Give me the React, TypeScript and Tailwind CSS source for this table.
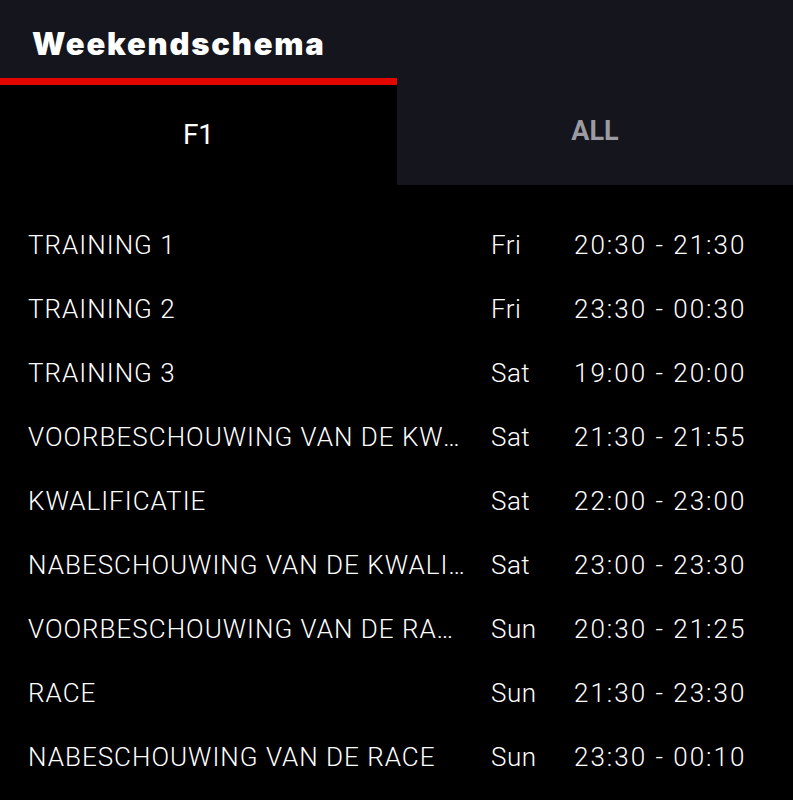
const sessions = [
  { name: "TRAINING 1", day: "Fri", time: "20:30 - 21:30" },
  { name: "TRAINING 2", day: "Fri", time: "23:30 - 00:30" },
  { name: "TRAINING 3", day: "Sat", time: "19:00 - 20:00" },
  { name: "VOORBESCHOUWING VAN DE KWALIFICATIE", day: "Sat", time: "21:30 - 21:55" },
  { name: "KWALIFICATIE", day: "Sat", time: "22:00 - 23:00" },
  { name: "NABESCHOUWING VAN DE KWALIFICATIE", day: "Sat", time: "23:00 - 23:30" },
  { name: "VOORBESCHOUWING VAN DE RACE", day: "Sun", time: "20:30 - 21:25" },
  { name: "RACE", day: "Sun", time: "21:30 - 23:30" },
  { name: "NABESCHOUWING VAN DE RACE", day: "Sun", time: "23:30 - 00:10" },
];

export default function App() {
  return (
    <main className="w-[793px] h-[800px] bg-black text-white overflow-hidden font-['Roboto',sans-serif]">
      {/* header */}
      <div className="h-[78px] bg-[#15151e] flex items-center pl-8 pt-2">
        <h1 className="text-[31px] font-black tracking-[1.8px] font-['Inter',sans-serif] leading-none">
          Weekendschema
        </h1>
      </div>

      {/* tabs */}
      <div className="flex h-[107px]">
        <div className="w-[397px] bg-black border-t-[7px] border-[#e10600] flex items-center justify-center">
          <span className="text-[28px] font-normal">F1</span>
        </div>
        <div className="flex-1 bg-[#15151e] flex items-center justify-center">
          <span className="text-[27px] font-bold text-[#9b9ba1]">ALL</span>
        </div>
      </div>

      {/* schedule */}
      <div className="pt-[28px]">
        {sessions.map((s) => (
          <div key={s.name} className="flex items-center h-[64px] pl-[28px] text-[26px] font-light">
            <span className="w-[463px] shrink-0 truncate pr-[24px] tracking-[1px]">{s.name}</span>
            <span className="w-[83px] shrink-0 tracking-[0.5px]">{s.day}</span>
            <span className="tracking-[2px]">{s.time}</span>
          </div>
        ))}
      </div>
    </main>
  );
}
